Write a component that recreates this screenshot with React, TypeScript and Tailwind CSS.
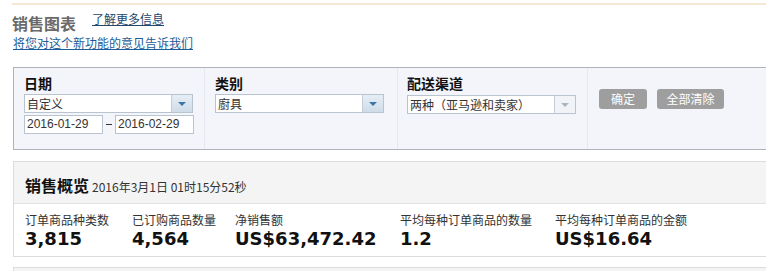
const CJK = "font-['Noto_Sans_CJK_SC','Noto_Sans',sans-serif]"

type SelectProps = { value: string; width: string; muted?: boolean }

function FakeSelect({ value, width, muted }: SelectProps) {
  return (
    <div className={`flex h-[19px] ${width} border border-[#b8c4d0] bg-white`}>
      <div className={`flex-1 pl-[2px] text-[12px] leading-[17px] text-[#333] ${CJK}`}>{value}</div>
      <div
        className={`flex w-[21px] items-center justify-center border-l border-[#c3ced9] ${
          muted ? 'bg-[#f1f3f6]' : 'bg-gradient-to-b from-[#e6eef5] to-[#cfdce8]'
        }`}
      >
        <div
          className={`h-0 w-0 border-x-[4px] border-t-[4px] border-x-transparent ${
            muted ? 'border-t-[#a7b6c3]' : 'border-t-[#3d76a6]'
          }`}
        />
      </div>
    </div>
  )
}

function DateInput({ value }: { value: string }) {
  return (
    <div className="h-[19px] w-[79px] border border-[#b8c4d0] bg-white pl-[2px] font-['Liberation_Sans',sans-serif] text-[12px] leading-[17px] text-[#333]">
      {value}
    </div>
  )
}

const METRICS = [
  { label: '订单商品种类数', value: '3,815', w: 'w-[107px]' },
  { label: '已订购商品数量', value: '4,564', w: 'w-[103px]' },
  { label: '净销售额', value: 'US$63,472.42', w: 'w-[165px]' },
  { label: '平均每种订单商品的数量', value: '1.2', w: 'w-[155px]' },
  { label: '平均每种订单商品的金额', value: 'US$16.64', w: 'w-[180px]' },
]

export default function App() {
  return (
    <div className={`h-[271px] w-[766px] overflow-hidden bg-white ${CJK}`}>
      <div className="pt-[3px]">
        <div className="ml-[12px] h-[2px] bg-[#f6e8d4]" />
      </div>

      {/* title + links */}
      <div className="mt-[6px] flex h-[24px] items-start pl-[12px]">
        <span className="text-[16px] font-bold leading-[24px] text-[#6a6a6a]">销售图表</span>
        <a className="ml-[16px] text-[12px] leading-[16px] text-[#24466b] underline">了解更多信息</a>
      </div>
      <div className="pl-[13px] text-[12px] leading-[16px]">
        <a className="text-[#1c5d99] underline">将您对这个新功能的意见告诉我们</a>
      </div>

      {/* filter panel */}
      <div className="ml-[13px] mt-[16px] flex h-[83px] w-[760px] border border-[#b0b4ba] bg-[#f4f5fb]">
        <div className="w-[191px] border-r border-[#e6e8f0] pl-[10px] pt-[6px]">
          <div className="text-[14px] font-bold leading-[18px] text-[#111]">日期</div>
          <div className="mt-[2px]">
            <FakeSelect value="自定义" width="w-[169px]" />
          </div>
          <div className="mt-[2px] flex items-center">
            <DateInput value="2016-01-29" />
            <div className="mx-[3px] h-px w-[6px] bg-[#333]" />
            <DateInput value="2016-02-29" />
          </div>
        </div>
        <div className="w-[193px] border-r border-[#e6e8f0] pl-[10px] pt-[6px]">
          <div className="text-[14px] font-bold leading-[18px] text-[#111]">类别</div>
          <div className="mt-[2px]">
            <FakeSelect value="廚具" width="w-[169px]" />
          </div>
        </div>
        <div className="w-[190px] border-r border-[#e6e8f0] pl-[9px] pt-[6px]">
          <div className="text-[14px] font-bold leading-[18px] text-[#111]">配送渠道</div>
          <div className="mt-[3px]">
            <FakeSelect value="两种（亚马逊和卖家）" width="w-[169px]" muted />
          </div>
        </div>
        <div className="flex items-start gap-[10px] pl-[11px] pt-[21px]">
          <button className="h-[20px] w-[48px] rounded-[3px] bg-[#9e9e9e] text-[12px] leading-[20px] text-white">确定</button>
          <button className="h-[20px] w-[67px] rounded-[3px] bg-[#9e9e9e] text-[12px] leading-[20px] text-white">全部清除</button>
        </div>
      </div>

      {/* sales overview */}
      <div className="ml-[13px] mt-[11px] w-[760px] border border-[#dcdcdc]">
        <div className="flex h-[42px] items-baseline border-b border-[#e2e2e2] bg-[#f4f4f4] pl-[11px] pt-[13px]">
          <span className="text-[16px] font-bold leading-[20px] text-[#111]">销售概览</span>
          <span className="ml-[3px] text-[12px] leading-[20px] text-[#333]">2016年3月1日 01时15分52秒</span>
        </div>
        <div className="flex h-[52px] bg-white pl-[11px] pt-[8px]">
          {METRICS.map((m) => (
            <div key={m.label} className={m.w}>
              <div className="text-[12px] leading-[16px] text-[#333]">{m.label}</div>
              <div className="font-['DejaVu_Sans',Verdana,sans-serif] text-[18px] font-bold leading-[22px] text-[#111]">
                {m.value}
              </div>
            </div>
          ))}
        </div>
      </div>

      <div className="ml-[13px] mt-[10px] h-[20px] w-[760px] border border-[#dcdcdc] bg-[#f4f4f4]" />
    </div>
  )
}
